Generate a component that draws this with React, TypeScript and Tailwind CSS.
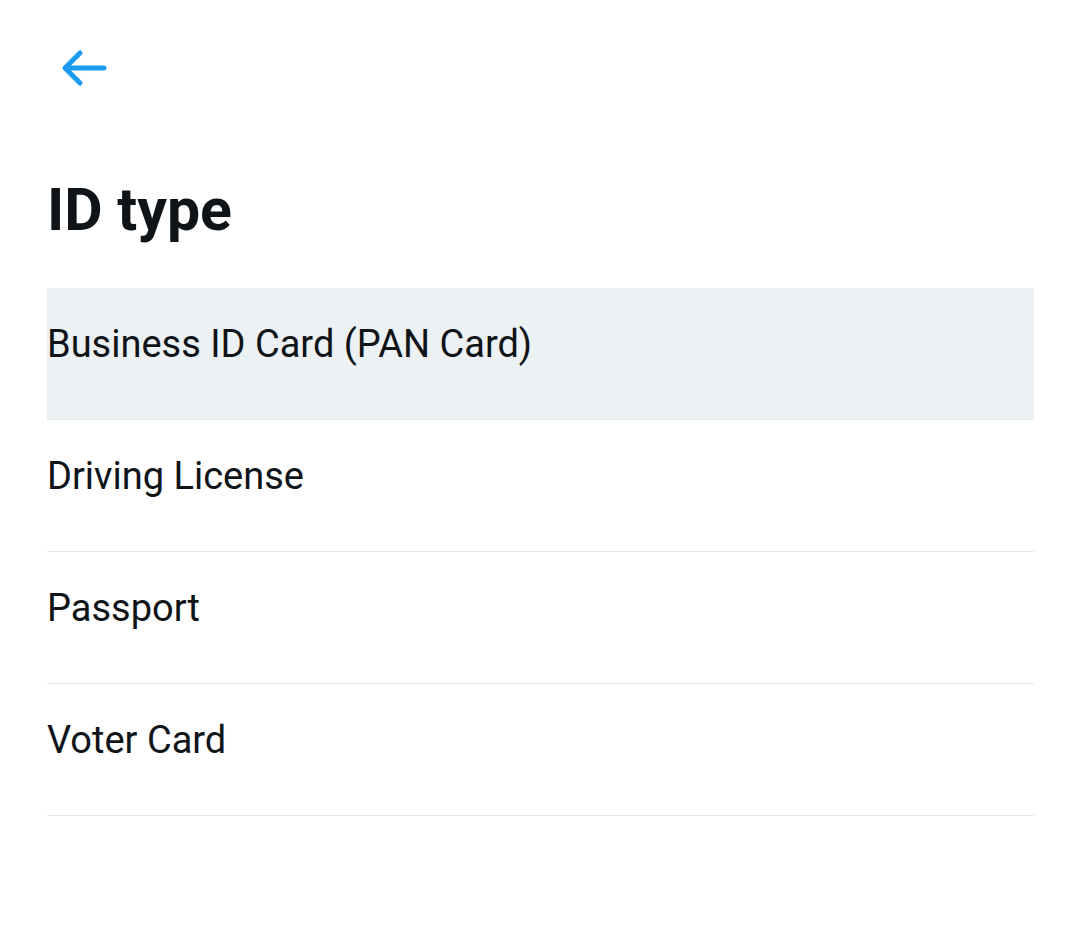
import { useState } from 'react';

const idTypes = ['Business ID Card (PAN Card)', 'Driving License', 'Passport', 'Voter Card'];

export default function App() {
  const [selected, setSelected] = useState(0);

  return (
    <div className="min-h-screen w-full bg-white text-[#0f1419]" style={{ fontFamily: 'Roboto, "Noto Sans", sans-serif' }}>
      <div className="pl-[47px] pr-[46px] pt-[40px]">
        {/* Back button */}
        <button className="flex h-[56px] w-[64px] items-center justify-start pl-[13px]">
          <svg width="48" height="40" viewBox="0 0 48 40" fill="none" stroke="#1d9bf0" strokeWidth="5" strokeLinecap="round" strokeLinejoin="round">
            <path d="M44 20H6" />
            <path d="M20 5L5 20l15 15" />
          </svg>
        </button>

        <h1 className="mt-[84px] text-[59px] font-bold leading-none">ID type</h1>

        <ul className="mt-[49px]">
          {idTypes.map((name, i) => (
            <li
              key={name}
              onClick={() => setSelected(i)}
              className={`h-[132px] border-b border-[#e6eaec] pt-[35px] text-[38px] leading-[42px] ${
                i === selected ? 'bg-[#ecf1f3]' : ''
              }`}
            >
              {name}
            </li>
          ))}
        </ul>
      </div>
    </div>
  );
}
